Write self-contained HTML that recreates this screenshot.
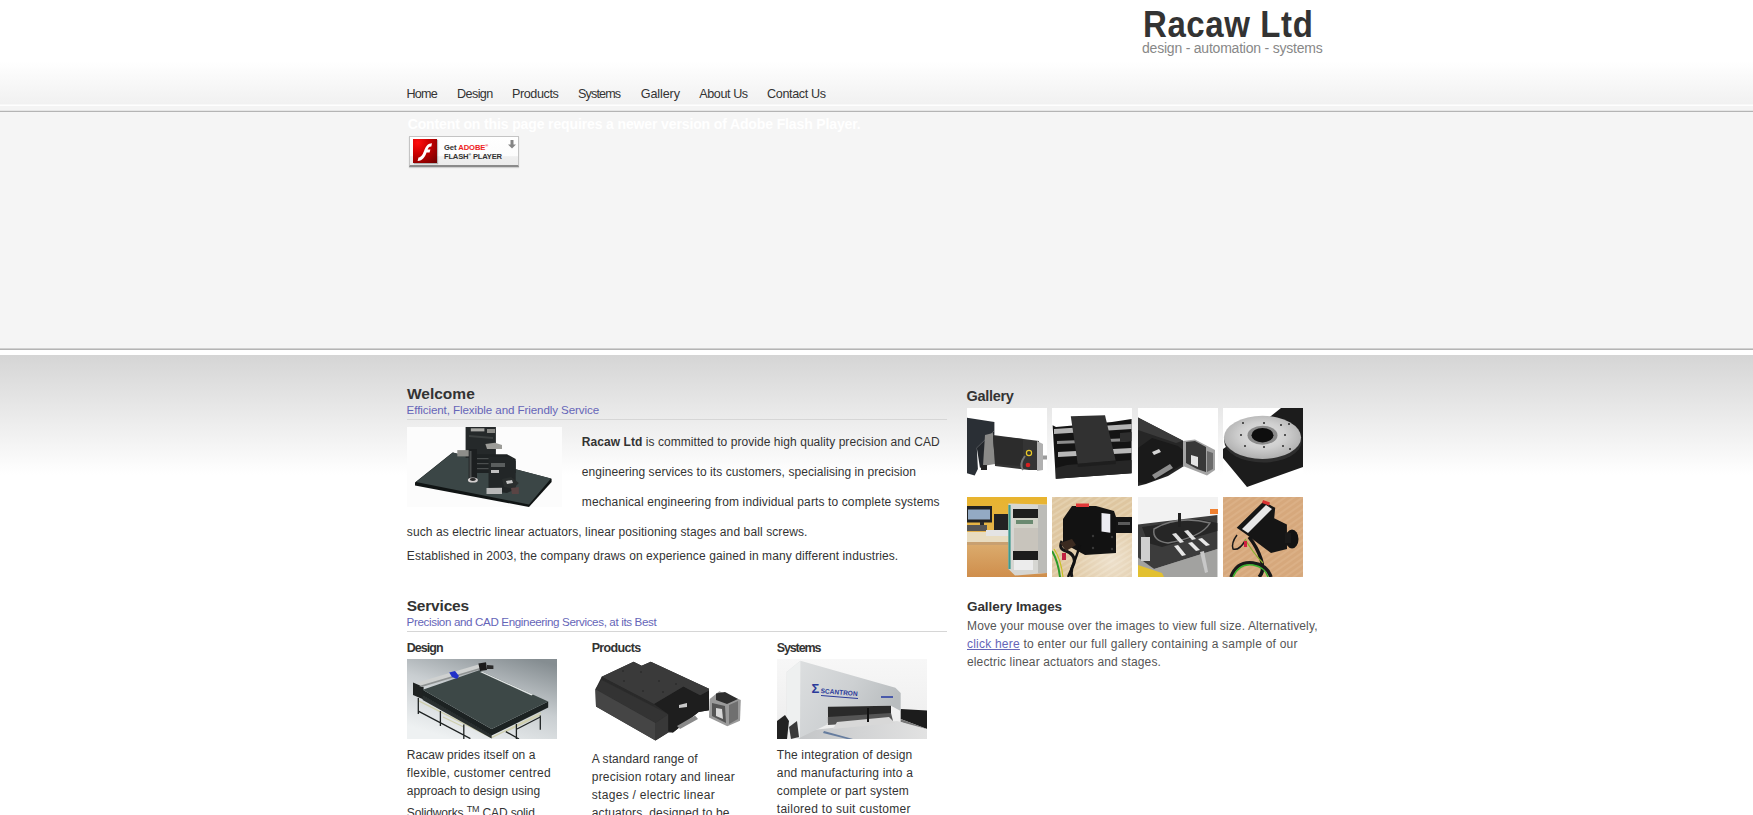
<!DOCTYPE html>
<html><head><meta charset="utf-8"><title>Racaw Ltd</title>
<style>
html,body{margin:0;padding:0;}
body{width:1753px;height:815px;overflow:hidden;position:relative;background:#fff;font-family:"Liberation Sans",sans-serif;}
.t{position:absolute;line-height:1;white-space:nowrap;}
.t b{font-weight:700;}
.a{position:absolute;}
</style></head><body>
<div class="a" style="left:0;top:0;width:1753px;height:104px;background:linear-gradient(#fff 0px,#fff 61px,#f1f1f1 104px)"></div>
<div class="a" style="left:0;top:104px;width:1753px;height:1px;background:#f8f8f8"></div>
<div class="a" style="left:0;top:105px;width:1753px;height:1px;background:#fefefe"></div>
<div class="a" style="left:0;top:106px;width:1753px;height:4px;background:#f4f4f4"></div>
<div class="a" style="left:0;top:110px;width:1753px;height:1px;background:#e6e6e6"></div>
<div class="a" style="left:0;top:111px;width:1753px;height:1px;background:#b4b4b4"></div>
<div class="a" style="left:0;top:112px;width:1753px;height:237px;background:#f5f5f5"></div>
<div class="a" style="left:0;top:348px;width:1753px;height:1px;background:#d0d0d0"></div>
<div class="a" style="left:0;top:349px;width:1753px;height:1px;background:#b4b4b4"></div>
<div class="a" style="left:0;top:350px;width:1753px;height:5px;background:#fff"></div>
<div class="a" style="left:0;top:355px;width:1753px;height:120px;background:linear-gradient(#d5d5d5,#fff)"></div>
<div class="a" style="left:407px;top:419px;width:540px;height:1px;background:#d6d6d6"></div>
<div class="a" style="left:407px;top:631px;width:540px;height:1px;background:#d6d6d6"></div>
<!-- flash button -->
<div class="a" style="left:409px;top:136px;width:108px;height:28px;border:1px solid #c4c4c4;border-bottom:2px solid #8a8a8a;box-shadow:0 1px 1px rgba(0,0,0,.15);background:linear-gradient(#fff 0%,#fcfcfc 68%,#efefef 70%,#ebebeb 100%)"></div>
<div class="a" style="left:413px;top:139px;width:24px;height:24px;background:radial-gradient(circle at 20% 15%,#ff1010 0%,#cc0000 40%,#6a0000 100%);box-shadow:1px 1px 1px rgba(0,0,0,.25)"></div>
<svg class="a" style="left:413px;top:139px" width="24" height="24" viewBox="0 0 24 24"><path d="M5.5 18.5 C 9 18, 10 14.5, 11.6 10.5 C 13.2 6.5, 15 4.5, 19 4.2 L 18.3 7.4 C 15.8 7.6, 15.2 9, 14.6 10.6 L 17.4 10.6 L 16.6 13.4 L 13.6 13.4 C 11.8 18, 10 21.5, 4.6 22 Z" fill="#fff"/></svg>
<svg class="a" style="left:508px;top:140px" width="8" height="9" viewBox="0 0 8 9"><path d="M2.5 0 H5.5 V4.5 H8 L4 8.5 L0 4.5 H2.5 Z" fill="#858585"/></svg>
<!-- welcome image 155x80 -->
<svg class="a" style="left:407px;top:427px" width="155" height="80" viewBox="0 0 155 80">
<rect width="155" height="80" fill="#fcfcfc"/>
<polygon points="45.6,25.4 8,55.5 8,58.5 122,80 144.6,55 144.6,51.8" fill="#101414"/>
<polygon points="46,25.6 9,55 122,77.5 144,51.6" fill="#3b4646"/>
<polygon points="58.6,0 88.9,0 88.9,29.4 58.6,31" fill="#25292a"/>
<polygon points="63.8,1.3 77.4,1.3 77.4,4.4 63.8,4.4" fill="#a8a8a4"/>
<polygon points="80,2 88,2 88,6 80,6" fill="#8a8a86"/>
<polygon points="62,8 86,10 86,12 62,10" fill="#3c4040"/>
<polygon points="78.4,17 88,15.8 95,18 95,22.1 80,22.1" fill="#9c9c98"/>
<polygon points="50.3,23.1 62.8,23.1 62.8,29.4 50.3,29.4" fill="#8e8e8a"/>
<polygon points="64.9,27.3 100,27.3 108.7,32 108.7,46.1 64.9,46.1" fill="#1e2223"/>
<g fill="#4a4e4e"><rect x="66" y="31" width="40" height="1.2"/><rect x="66" y="36" width="40" height="1.2"/><rect x="66" y="41" width="40" height="1.2"/></g>
<polygon points="81.5,29.4 104,30 108.7,34 108.7,62 100,66 81.5,64" fill="#222627"/>
<polygon points="84,36 98,36 98,40 84,40" fill="#5a5e5e"/>
<polygon points="84,43 92,43 92,46 84,46" fill="#c0c0c0"/>
<rect x="61.7" y="22" width="8.3" height="32.4" fill="#1c1f20"/>
<rect x="62.5" y="24" width="2" height="28" fill="#4a4e4e"/>
<ellipse cx="65.9" cy="53" rx="5" ry="2.6" fill="#d4d0d0"/>
<ellipse cx="65.9" cy="52.5" rx="3" ry="1.4" fill="#2a2a2a"/>
<polygon points="79.5,61 95,60.7 95,67 79.5,67" fill="#b8b8b8"/>
<polygon points="95,52 104,50 111.8,56 106,62 97,60" fill="#2a2e2e"/>
<polygon points="99,54 105,53 106,56 100,57" fill="#c8c8c8"/>
<polygon points="104,61 111.8,60 111.8,67 105,67" fill="#5a4444"/>
</svg>
<!-- design image 150x80 -->
<svg class="a" style="left:407px;top:659px" width="150" height="80" viewBox="0 0 150 80">
<defs><linearGradient id="dg" x1="0.85" y1="0" x2="0.3" y2="1"><stop offset="0" stop-color="#858d91"/><stop offset="0.5" stop-color="#c9ced1"/><stop offset="1" stop-color="#eef1f2"/></linearGradient></defs>
<rect width="150" height="80" fill="url(#dg)"/>
<g stroke="#cfcfae" stroke-width="1.3" fill="none">
<path d="M11.3 41.6 L84.6 78.7 M84.6 78.7 L134 54 M98.8 72.6 L133.3 56 M36 58 L56.8 68"/>
</g>
<g stroke="#1e2222" stroke-width="1.3" fill="none">
<path d="M11.3 52.2 L63.4 79.6 M11.3 39 V55 M33.4 52 V67 M56.8 65.5 V80 M109.4 65 V80 M133.3 56.6 V70.8 M98.8 72.6 L112 80 M110 70 L133.3 58"/>
</g>
<polygon points="6,23.6 16.6,28 16.6,40.4 6,36" fill="#1e2222"/>
<polygon points="15.7,36 84.6,76 84.6,79.5 15.7,41" fill="#2a3030"/>
<polygon points="15.7,30.7 84.6,69.9 141.2,42.5 141.2,48.5 84.6,76.5 15.7,36.5" fill="#1c2222"/>
<polygon points="15.7,30.7 72.3,11.3 141.2,42.5 84.6,69.9" fill="#3d4847"/>
<polygon points="73,13 75,12.5 126,35.5 124.4,36.5" fill="#e0e4e4"/>
<polygon points="10.4,23.6 75.8,4.2 76.5,9.5 14.8,28" fill="#cfd1d0"/>
<polygon points="12,27 76,8 76.5,9.5 14.8,28" fill="#8e9292"/>
<polygon points="71.4,4.5 79,3.3 80,11 73,12.1" fill="#1a1a1a"/>
<polygon points="80,6 86.4,6.5 86.4,10 80,10" fill="#2a2a2a"/>
<polygon points="42.2,13.5 48,12.1 52,17 50,20.1 45,18" fill="#2232c8"/>
</svg>
<!-- products image -->
<svg class="a" style="left:591px;top:659px" width="150" height="84" viewBox="0 0 150 84">
<rect width="150" height="84" fill="#fff"/>
<polygon points="4.4,30.2 10.7,17.7 42.6,2.8 50.6,6.8 59.8,2.8 118,29.7 118,51.3 107.6,52.9 82,73.6 77.3,73.6 64.5,81.6 5,47.4" fill="#2c2c2c"/>
<polygon points="4.4,30.2 10.7,21 77.3,55.3 64.5,64.1" fill="#333"/>
<polygon points="4.4,30.2 64.5,64.1 64.5,81.6 5,47.4" fill="#454545"/>
<polygon points="64.5,64.1 77.3,55.3 77.3,73.6 64.5,81.6" fill="#383838"/>
<polygon points="62.9,44.9 92.4,27.4 109.2,36.2 118,31.4 118,51.3 107.6,52.9 82,73.6 77.3,72 77.3,55.3" fill="#1e1e1e"/>
<polygon points="10.7,17.7 42.6,2.8 50.6,6.8 59.8,2.8 118,29.7 118,31.4 109.2,36.2 92.4,27.4 62.9,44.9" fill="#3a3a3a"/>
<polygon points="10.7,17.7 62.9,44.9 62.9,47 10.7,20" fill="#2a2a2a"/>
<g fill="#222"><circle cx="32" cy="12" r="0.8"/><circle cx="50" cy="13" r="0.8"/><circle cx="33" cy="22" r="0.8"/><circle cx="68" cy="22" r="0.8"/><circle cx="52" cy="32" r="0.8"/><circle cx="72" cy="33" r="0.8"/><circle cx="85" cy="25" r="0.8"/></g>
<polygon points="88,46 96,44 96,48 88,49" fill="#c8c8c8"/>
<polygon points="86,67 104,56.5 107,60 89,70" fill="#8a8a8a"/>
<polygon points="118.7,40.1 128.3,32.2 149.8,41 149,61.7 136.3,67.3 118,58.5" fill="#9a9a9a"/>
<polygon points="125,34.6 134,33 147,40 136,45 125,41" fill="#2e2e2e"/>
<polygon points="121,44 134,47 135,64 121,57" fill="#555"/>
<polygon points="125,49 131,50 132,60 125,57" fill="#d8d8d8"/>
<polygon points="138,46 147,42 147,60 138,65" fill="#707070"/>
</svg>
<!-- systems image -->
<svg class="a" style="left:777px;top:659px" width="150" height="80" viewBox="0 0 150 80">
<defs><linearGradient id="sg" x1="0" y1="0" x2="0" y2="1"><stop offset="0" stop-color="#f7f7f7"/><stop offset="1" stop-color="#ececec"/></linearGradient>
<linearGradient id="sh" x1="0" y1="0" x2="1" y2="0.4"><stop offset="0" stop-color="#dfe1e2"/><stop offset="0.6" stop-color="#cdd0d2"/><stop offset="1" stop-color="#b9bdbf"/></linearGradient>
<linearGradient id="st" x1="0" y1="0" x2="1" y2="0"><stop offset="0" stop-color="#c4c6c8"/><stop offset="1" stop-color="#e2e2e2"/></linearGradient></defs>
<rect width="150" height="80" fill="url(#sg)"/>
<polygon points="123.7,50 150,51.5 150,70 123.7,60" fill="#1c1c1c"/>
<polygon points="123.7,60 150,70 150,72 123.7,63" fill="#777"/>
<polygon points="26,72 120,62 150,70 150,80 22,80" fill="url(#st)"/>
<polygon points="23.4,1.8 118.4,28.7 123.7,34 123.7,52 114,46.7 50.9,47.7 49.8,65.7 21.3,79.4 9.7,70.9 9.7,12.9" fill="url(#sh)"/>
<polygon points="9.7,12.9 23.4,1.8 23,79 9.7,70.9" fill="#eef0f0"/>
<polygon points="50.9,47.7 114,46.7 114,58 50.9,64" fill="#2a2a2a"/>
<polygon points="50.9,58 114,54 116,62 50.9,66" fill="#555"/>
<polygon points="60,63 112,58 118,64 56,70" fill="#d8d8d8"/>
<rect x="90" y="49" width="2" height="14" fill="#111"/>
<polygon points="47,72 76,80 70,80 46,74" fill="#3a5a8a" opacity="0.7"/>
<polygon points="0,62 8,56 12,62 10,80 0,80" fill="#222"/>
<polygon points="12,68 20,62 22,78 14,80" fill="#3a3a3a"/>
<text x="34.5" y="33.5" font-family="Liberation Sans" font-weight="700" font-size="13" fill="#2a3a9a">&#931;</text>
<text x="43.5" y="34" font-family="Liberation Sans" font-weight="700" font-size="6.8" fill="#2a3a9a" transform="rotate(5 43.5 34)" textLength="37" lengthAdjust="spacingAndGlyphs">SCANTRON</text>
<polygon points="44,36 81,39 81,40 44,37" fill="#2a3a9a"/>
<rect x="104" y="37" width="12" height="2" fill="#4a5aaa"/>
</svg>
<!-- gallery thumbs -->
<svg class="a" style="left:967px;top:408px" width="80" height="80" viewBox="0 0 80 80">
<rect width="80" height="80" fill="#fff"/>
<polygon points="0,9.8 27.4,14 27.4,22.6 9.8,39.7 10.9,61 7.7,67.5 0,65.3" fill="#2a2f35"/>
<polygon points="9.8,39.7 27.4,22.6 27,50 13,60" fill="#23272c"/>
<polygon points="18,27 26,25 28,56 16,58" fill="#8a8a88"/>
<polygon points="26,27 72,33 72,62 62,62 28,58" fill="#343434"/>
<polygon points="26,28 56,31 56,58 28,56" fill="#2c2c2c"/>
<polygon points="70,33 76,36 76,62 70,63" fill="#b0b0b0"/>
<rect x="76" y="47.5" width="4" height="4" fill="#9a9a9a"/>
<circle cx="61" cy="57" r="2.3" fill="#d82020"/>
<circle cx="62" cy="45" r="2.6" fill="none" stroke="#e8c828" stroke-width="1.2"/>
<path d="M58 48 Q 52 56 56 62" stroke="#777" stroke-width="2" fill="none"/>
<polygon points="14,57 20,57 20,62 14,62" fill="#222"/>
</svg>
<svg class="a" style="left:1052px;top:408px" width="80" height="80" viewBox="0 0 80 80">
<rect width="80" height="80" fill="#fff"/>
<polygon points="0.6,17.3 4,19 60,14 79.6,10.9 79.6,65.3 3.8,70.7" fill="#141414"/>
<polygon points="2,21 79.6,16 79.6,21 2,26" fill="#b4b4b4"/>
<polygon points="5,33 79.6,30 79.6,33 5,36" fill="#8c8c8c"/>
<polygon points="6,44 79.6,40 79.6,45 6,49" fill="#b8b8b8"/>
<polygon points="15,57 79.6,52 79.6,65.3 3.8,70.7 3.8,60" fill="#262626"/>
<polygon points="25.7,55.7 63.7,52.5 63.7,56 25.7,59" fill="#1e1e1e"/>
<polygon points="18.8,8.2 53,7.2 63.7,52.5 25.7,55.7" fill="#313131"/>
<polygon points="68,25 79.6,24 79.6,33 68,34" fill="#2e2e2e"/>
</svg>
<svg class="a" style="left:1138px;top:408px" width="80" height="80" viewBox="0 0 80 80">
<rect width="80" height="80" fill="#fff"/>
<polygon points="0,9.5 45,32.7 46,58 30,68 8,76 0,78" fill="#262626"/>
<polygon points="0,9.5 45,32.7 38,35 0,22" fill="#3a3a3a"/>
<polygon points="0,40 14,30 40,38 45,42 45,56 22,70 6,76 0,74" fill="#1a1a1a"/>
<polygon points="14,44 21,41 23,44 16,47" fill="#d4d4d4"/>
<polygon points="14,67 32,56 35,60 17,71" fill="#8e8e8e"/>
<polygon points="45,33 57,31.5 77,42 77,62 69,67.5 45,58" fill="#a4a4a4"/>
<polygon points="48,34 57,33 68,39 68,64 59,61 48,55" fill="#383838"/>
<polygon points="69,43 75,45 75,61 69,64" fill="#6a6a6a"/>
<polygon points="53,47 60,49 60,59 53,56" fill="#e4e4e4"/>
</svg>
<svg class="a" style="left:1223px;top:408px" width="80" height="80" viewBox="0 0 80 80">
<defs><radialGradient id="dk" cx="0.5" cy="0.45" r="0.6"><stop offset="0" stop-color="#e2e2e2"/><stop offset="0.5" stop-color="#cfcfcf"/><stop offset="1" stop-color="#a8a8a8"/></radialGradient></defs>
<rect width="80" height="80" fill="#fff"/>
<polygon points="0,41 0,50 24,79 80,59 80,0 58,0 48,8" fill="#1c1c1c"/>
<ellipse cx="40" cy="33" rx="38.8" ry="21.5" fill="#2e2e2e"/>
<ellipse cx="39.5" cy="29.4" rx="38.6" ry="21.6" fill="url(#dk)"/>
<ellipse cx="39.5" cy="27.2" rx="15" ry="9.5" fill="#8a8a8a"/>
<ellipse cx="39.5" cy="27.2" rx="11" ry="7.2" fill="#0e0e0e"/>
<g fill="#2a2a2a"><circle cx="20" cy="15" r="1"/><circle cx="41" cy="15" r="1"/><circle cx="58" cy="17" r="1"/><circle cx="18" cy="27" r="1"/><circle cx="62" cy="27" r="1"/><circle cx="22" cy="38" r="1"/><circle cx="41" cy="39" r="1"/><circle cx="60" cy="38" r="1"/><circle cx="66" cy="16" r="1"/><circle cx="67" cy="41" r="1"/></g>
</svg>
<svg class="a" style="left:967px;top:497px" width="80" height="80" viewBox="0 0 80 80">
<defs><linearGradient id="t5" x1="0" y1="0" x2="0" y2="1"><stop offset="0" stop-color="#e8b42e"/><stop offset="0.4" stop-color="#e6b448"/><stop offset="0.55" stop-color="#dcae70"/><stop offset="1" stop-color="#cf8e4c"/></linearGradient></defs>
<rect width="80" height="80" fill="url(#t5)"/>
<rect x="0" y="35" width="42" height="12" fill="#e8dcc0"/>
<rect x="0" y="45" width="42" height="3" fill="#c8a070"/>
<rect x="0" y="9" width="25" height="16.5" fill="#222"/>
<rect x="1" y="12.5" width="22" height="10" fill="#93aac4"/>
<rect x="13" y="25" width="4" height="9" fill="#2a2a2a"/>
<rect x="0" y="28" width="20" height="6" fill="#555"/>
<rect x="27" y="17" width="14" height="17" fill="#232323"/>
<rect x="19" y="33" width="23" height="6" fill="#e4e4e4"/>
<polygon points="41.4,6.5 80,7.5 80,76 48,78.5 41.4,72" fill="#d6d6d2"/>
<rect x="41.4" y="8" width="2.2" height="64" fill="#3c9a90"/>
<rect x="46" y="12" width="25" height="9" fill="#1e1e1e"/>
<rect x="47" y="21" width="24" height="10" fill="#d2d2c8"/>
<rect x="49" y="23" width="17" height="4" fill="#6a8a70"/>
<rect x="47" y="31" width="24" height="24" fill="#c8c4bc"/>
<rect x="46" y="54" width="25" height="9" fill="#1c1c1c"/>
<rect x="47" y="63" width="19" height="10" fill="#ececec"/>
<rect x="71" y="8" width="9" height="68" fill="#bcbcb8"/>
</svg>
<svg class="a" style="left:1052px;top:497px" width="80" height="80" viewBox="0 0 80 80">
<defs><pattern id="wd" width="5" height="5" patternUnits="userSpaceOnUse" patternTransform="rotate(-32)"><rect width="5" height="5" fill="#dec6a0"/><rect width="5" height="2" fill="#e4d0ae"/></pattern>
<radialGradient id="wl" cx="0.75" cy="0.8" r="0.6"><stop offset="0" stop-color="#fff" stop-opacity="0.45"/><stop offset="1" stop-color="#fff" stop-opacity="0"/></radialGradient></defs>
<rect width="80" height="80" fill="url(#wd)"/>
<rect width="80" height="80" fill="url(#wl)"/>
<polygon points="11,22 20,9 44,9 62,14 64,20 64,56 33,58 11,46" fill="#121212"/>
<rect x="24" y="6.5" width="13" height="3.5" fill="#e03838"/>
<polygon points="49.5,15.9 58.3,17 58.3,35.8 49.5,34.5" fill="#ececf2"/>
<rect x="64" y="20" width="16" height="16" fill="#141414"/>
<rect x="66" y="25" width="12" height="3" fill="#5a5a5a"/>
<g fill="#3a3a3a"><circle cx="41" cy="39" r="1.2"/><circle cx="60" cy="40" r="1.2"/><circle cx="41" cy="51" r="1.2"/><circle cx="60" cy="52" r="1.2"/></g>
<path d="M10 44 Q 6 52 14 54 Q 24 58 22 66 Q 18 74 20 80" stroke="#161616" stroke-width="3" fill="none"/>
<path d="M28 48 Q 24 62 16 80" stroke="#111" stroke-width="2.5" fill="none"/>
<path d="M0 54 Q 6 64 8 80" stroke="#2a9a2a" stroke-width="2" fill="none"/>
<path d="M2 52 Q 9 62 11 80" stroke="#c8c020" stroke-width="1.2" fill="none"/>
<rect x="10" y="56" width="4" height="7" fill="#c02040"/>
<polygon points="8,46 20,42 24,48 14,54" fill="#3a2a20"/>
</svg>
<svg class="a" style="left:1138px;top:497px" width="80" height="80" viewBox="0 0 80 80">
<rect width="80" height="80" fill="#f2f2f2"/>
<polygon points="0,60 16,72 79.4,52 79.4,80 0,80" fill="#a2a2a0"/>
<polygon points="0,27.6 79.4,18.1 79.4,51.9 16,72 0,60.4" fill="#3c3c3c"/>
<polygon points="4,30 60,22 79.4,26 79.4,34 24,50 10,46" fill="#262626"/>
<path d="M16 32 Q 40 18 72 26 Q 64 40 30 46 Q 14 44 16 32 Z" fill="none" stroke="#777" stroke-width="1.5"/>
<polygon points="34,37 38,36 46,45 42,46" fill="#e0e0e0"/>
<polygon points="46,34 50,33 58,42 54,43" fill="#e0e0e0"/>
<polygon points="36,49 40,48 48,58 44,59" fill="#e8e8e8"/>
<polygon points="50,46 54,45 62,53 58,54" fill="#e8e8e8"/>
<polygon points="60,42 64,41 72,48 68,49" fill="#e8e8e8"/>
<rect x="40" y="16" width="3" height="14" fill="#222"/>
<polygon points="0,68 24,76 26,80 0,80" fill="#e2c030"/>
<rect x="72" y="12" width="8" height="5" fill="#f08030"/>
<polygon points="62,55 66,54 70,75 67,76" fill="#c8c8c8"/>
<rect x="3" y="40" width="9" height="24" fill="#cfcfcf"/>
</svg>
<svg class="a" style="left:1223px;top:497px" width="80" height="80" viewBox="0 0 80 80">
<defs><pattern id="wd2" width="5" height="5" patternUnits="userSpaceOnUse" patternTransform="rotate(-35)"><rect width="5" height="5" fill="#d6a87c"/><rect width="5" height="2" fill="#dbb086"/></pattern></defs>
<rect width="80" height="80" fill="url(#wd2)"/>
<polygon points="13.7,30.8 40.5,4.4 52.2,10.8 51.2,21.3 63.9,27.6 64,52 48,56.1 22.7,37.1" fill="#151515"/>
<polygon points="19,32 43,8 49,12 25,36" fill="#e6e6e6"/>
<polygon points="40,3 47,5.5 46,8.5 39,6" fill="#d83030"/>
<ellipse cx="69" cy="42" rx="6.5" ry="9.5" fill="#131313"/>
<rect x="62" y="36" width="6" height="10" fill="#1a1a1a"/>
<path d="M26 40 Q 34 50 38 62 Q 42 74 36 80" stroke="#151515" stroke-width="3.5" fill="none"/>
<path d="M8 80 Q 14 64 30 66 Q 44 68 48 80" stroke="#1a1a1a" stroke-width="3.5" fill="none"/>
<path d="M10 80 Q 16 66 30 68 Q 42 70 45 80" stroke="#3cb030" stroke-width="1.5" fill="none"/>
<path d="M22 42 Q 30 56 40 66" stroke="#8ab030" stroke-width="1.2" fill="none"/>
<path d="M14 38 Q 8 46 10 52 Q 16 54 22 44" stroke="#181818" stroke-width="1.5" fill="none"/>
<rect x="21" y="44" width="3" height="6" fill="#d02040"/>
</svg>

<div id="h1" class="t" style="left:1143.00px;top:9.05px;font-size:33.00px;font-weight:700;color:#333;letter-spacing:0.594px;transform:scaleY(1.13);transform-origin:0 29.5px;">Racaw Ltd</div>
<div id="h2" class="t" style="left:1142.00px;top:41.14px;font-size:14.00px;font-weight:400;color:#888;letter-spacing:-0.213px;">design - automation - systems</div>
<div id="n0" class="t" style="left:406.50px;top:88.33px;font-size:12.60px;font-weight:400;color:#333;letter-spacing:-0.769px;">Home</div>
<div id="n1" class="t" style="left:457.00px;top:88.33px;font-size:12.60px;font-weight:400;color:#333;letter-spacing:-0.581px;">Design</div>
<div id="n2" class="t" style="left:512.00px;top:88.33px;font-size:12.60px;font-weight:400;color:#333;letter-spacing:-0.415px;">Products</div>
<div id="n3" class="t" style="left:578.00px;top:88.33px;font-size:12.60px;font-weight:400;color:#333;letter-spacing:-0.866px;">Systems</div>
<div id="n4" class="t" style="left:640.80px;top:88.33px;font-size:12.60px;font-weight:400;color:#333;letter-spacing:-0.118px;">Gallery</div>
<div id="n5" class="t" style="left:699.30px;top:88.33px;font-size:12.60px;font-weight:400;color:#333;letter-spacing:-0.430px;">About Us</div>
<div id="n6" class="t" style="left:767.10px;top:88.33px;font-size:12.60px;font-weight:400;color:#333;letter-spacing:-0.366px;">Contact Us</div>
<div id="fm" class="t" style="left:407.70px;top:117.14px;font-size:14.00px;font-weight:700;color:#fff;letter-spacing:-0.128px;">Content on this page requires a newer version of Adobe Flash Player.</div>
<div id="wh" class="t" style="left:406.90px;top:385.67px;font-size:15.50px;font-weight:700;color:#333;letter-spacing:0.020px;">Welcome</div>
<div id="ws" class="t" style="left:406.60px;top:404.07px;font-size:11.60px;font-weight:400;color:#6565b8;letter-spacing:-0.098px;">Efficient, Flexible and Friendly Service</div>
<div id="p1" class="t" style="left:581.80px;top:435.84px;font-size:12.00px;font-weight:400;color:#333;letter-spacing:0.058px;"><b>Racaw Ltd</b> is committed to provide high quality precision and CAD</div>
<div id="p2" class="t" style="left:581.80px;top:465.84px;font-size:12.00px;font-weight:400;color:#333;letter-spacing:0.064px;">engineering services to its customers, specialising in precision</div>
<div id="p3" class="t" style="left:581.80px;top:495.84px;font-size:12.00px;font-weight:400;color:#333;letter-spacing:0.121px;">mechanical engineering from individual parts to complete systems</div>
<div id="p4" class="t" style="left:406.80px;top:525.84px;font-size:12.00px;font-weight:400;color:#333;letter-spacing:0.102px;">such as electric linear actuators, linear positioning stages and ball screws.</div>
<div id="p5" class="t" style="left:406.80px;top:550.24px;font-size:12.00px;font-weight:400;color:#333;letter-spacing:0.091px;">Established in 2003, the company draws on experience gained in many different industries.</div>
<div id="sh" class="t" style="left:406.70px;top:597.67px;font-size:15.50px;font-weight:700;color:#333;letter-spacing:-0.185px;">Services</div>
<div id="ss" class="t" style="left:406.60px;top:616.17px;font-size:11.60px;font-weight:400;color:#6565b8;letter-spacing:-0.360px;">Precision and CAD Engineering Services, at its Best</div>
<div id="c1h" class="t" style="left:406.70px;top:642.41px;font-size:12.50px;font-weight:700;color:#333;letter-spacing:-0.958px;">Design</div>
<div id="c2h" class="t" style="left:591.70px;top:642.41px;font-size:12.50px;font-weight:700;color:#333;letter-spacing:-0.670px;">Products</div>
<div id="c3h" class="t" style="left:776.80px;top:642.41px;font-size:12.50px;font-weight:700;color:#333;letter-spacing:-1.138px;">Systems</div>
<div id="d0" class="t" style="left:406.80px;top:749.14px;font-size:12.00px;font-weight:400;color:#333;letter-spacing:0.052px;">Racaw prides itself on a</div>
<div id="d1" class="t" style="left:406.80px;top:767.14px;font-size:12.00px;font-weight:400;color:#333;letter-spacing:0.283px;">flexible, customer centred</div>
<div id="d2" class="t" style="left:406.80px;top:785.14px;font-size:12.00px;font-weight:400;color:#333;letter-spacing:-0.035px;">approach to design using</div>
<div id="d3" class="t" style="left:406.80px;top:805.34px;font-size:12.00px;font-weight:400;color:#333;letter-spacing:-0.138px;">Solidworks <sup style="font-size:9px;vertical-align:5px">TM</sup> CAD solid</div>
<div id="q0" class="t" style="left:591.80px;top:752.64px;font-size:12.00px;font-weight:400;color:#333;letter-spacing:0.064px;">A standard range of</div>
<div id="q1" class="t" style="left:591.80px;top:770.64px;font-size:12.00px;font-weight:400;color:#333;letter-spacing:0.185px;">precision rotary and linear</div>
<div id="q2" class="t" style="left:591.80px;top:788.64px;font-size:12.00px;font-weight:400;color:#333;letter-spacing:0.297px;">stages / electric linear</div>
<div id="q3" class="t" style="left:591.80px;top:806.64px;font-size:12.00px;font-weight:400;color:#333;letter-spacing:0.122px;">actuators, designed to be</div>
<div id="y0" class="t" style="left:776.80px;top:749.24px;font-size:12.00px;font-weight:400;color:#333;letter-spacing:0.138px;">The integration of design</div>
<div id="y1" class="t" style="left:776.80px;top:767.24px;font-size:12.00px;font-weight:400;color:#333;letter-spacing:0.174px;">and manufacturing into a</div>
<div id="y2" class="t" style="left:776.80px;top:785.24px;font-size:12.00px;font-weight:400;color:#333;letter-spacing:0.180px;">complete or part system</div>
<div id="y3" class="t" style="left:776.80px;top:803.24px;font-size:12.00px;font-weight:400;color:#333;letter-spacing:0.259px;">tailored to suit customer</div>
<div id="gh" class="t" style="left:966.60px;top:389.12px;font-size:14.50px;font-weight:700;color:#333;letter-spacing:-0.331px;">Gallery</div>
<div id="gih" class="t" style="left:967.00px;top:600.27px;font-size:13.50px;font-weight:700;color:#333;letter-spacing:-0.074px;">Gallery Images</div>
<div id="g1" class="t" style="left:967.00px;top:619.94px;font-size:12.00px;font-weight:400;color:#555;letter-spacing:0.134px;">Move your mouse over the images to view full size. Alternatively,</div>
<div id="g2" class="t" style="left:967.00px;top:637.84px;font-size:12.00px;font-weight:400;color:#555;letter-spacing:0.219px;"><span style="color:#6565b8;text-decoration:underline">click here</span> to enter our full gallery containing a sample of our</div>
<div id="g3" class="t" style="left:967.00px;top:655.84px;font-size:12.00px;font-weight:400;color:#555;letter-spacing:0.142px;">electric linear actuators and stages.</div>
<div id="fb1" class="t" style="left:444.00px;top:143.86px;font-size:7.60px;font-weight:700;color:#333;letter-spacing:-0.064px;">Get <span style="color:#ee2222">ADOBE<sup style="font-size:4px;vertical-align:3px">&reg;</sup></span></div>
<div id="fb2" class="t" style="left:444.00px;top:152.76px;font-size:7.60px;font-weight:700;color:#333;letter-spacing:-0.207px;">FLASH<sup style="font-size:4px;vertical-align:3px">&reg;</sup> PLAYER</div>
</body></html>
